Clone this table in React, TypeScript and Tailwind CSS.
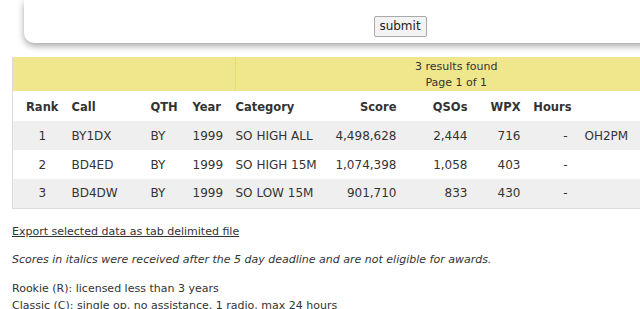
const rows = [
  { rank: 1, call: 'BY1DX', qth: 'BY', year: 1999, cat: 'SO HIGH ALL', score: '4,498,628', qsos: '2,444', wpx: '716', hours: '-', op: 'OH2PM' },
  { rank: 2, call: 'BD4ED', qth: 'BY', year: 1999, cat: 'SO HIGH 15M', score: '1,074,398', qsos: '1,058', wpx: '403', hours: '-', op: '' },
  { rank: 3, call: 'BD4DW', qth: 'BY', year: 1999, cat: 'SO LOW 15M', score: '901,710', qsos: '833', wpx: '430', hours: '-', op: '' },
];

export default function App() {
  return (
    <div className="w-[640px] h-[309px] overflow-hidden bg-white text-[12px] leading-[17px] text-[#333] font-['DejaVu_Sans','Verdana',sans-serif]">
      {/* search form card, only its bottom edge is in view */}
      <div className="ml-[24px] w-[752px] h-[43px] bg-white rounded-b-[10px] shadow-[0_3px_7px_rgba(0,0,0,0.35)] flex justify-center items-start pt-[16px]">
        <button className="w-[53px] h-[21px] border border-[#a9a9a9] rounded-[2px] bg-[#f3f3f3] text-[12px] leading-[19px] text-[#222]">
          submit
        </button>
      </div>

      <table className="mt-[14px] ml-[12px] w-[664px] table-fixed border-collapse border-l border-b border-[#dcdcdc]">
        <colgroup>
          <col className="w-[59px]" />
          <col className="w-[79px]" />
          <col className="w-[42px]" />
          <col className="w-[43px]" />
          <col className="w-[95px]" />
          <col className="w-[66px]" />
          <col className="w-[71px]" />
          <col className="w-[53px]" />
          <col className="w-[51px]" />
          <col className="w-[105px]" />
        </colgroup>
        <thead>
          <tr className="bg-[#f0e68c] h-[34px]">
            <th colSpan={4} className="font-normal"></th>
            <th colSpan={6} className="font-normal text-[11px] text-center leading-[16px] pt-[1px] border-l border-[#dcd6a4]">
              3 results found<br />Page 1 of 1
            </th>
          </tr>
          <tr className="h-[30px] font-bold text-[11.5px]">
            <th className="text-center pt-[2px]">Rank</th>
            <th className="text-left pt-[2px]">Call</th>
            <th className="text-left pt-[2px]">QTH</th>
            <th className="text-left pt-[2px]">Year</th>
            <th className="text-left pt-[2px]">Category</th>
            <th className="text-right pt-[2px]">Score</th>
            <th className="text-right pt-[2px]">QSOs</th>
            <th className="text-right pt-[2px]">WPX</th>
            <th className="text-right pt-[2px]">Hours</th>
            <th></th>
          </tr>
        </thead>
        <tbody>
          {rows.map((r, i) => (
            <tr key={r.rank} className={i % 2 === 0 ? 'h-[29px] bg-[#efefef]' : 'h-[29px] bg-white'}>
              <td className="text-center pt-[1px]">{r.rank}</td>
              <td className="pt-[1px]">{r.call}</td>
              <td className="pt-[1px]">{r.qth}</td>
              <td className="pt-[1px]">{r.year}</td>
              <td className="pt-[1px]">{r.cat}</td>
              <td className="text-right pt-[1px]">{r.score}</td>
              <td className="text-right pt-[1px]">{r.qsos}</td>
              <td className="text-right pt-[1px]">{r.wpx}</td>
              <td className="text-right pr-[4px] pt-[1px]">{r.hours}</td>
              <td className="pl-[13px] pt-[1px]">{r.op}</td>
            </tr>
          ))}
        </tbody>
      </table>

      <div className="pl-[12px] text-[11px]">
        <p className="mt-[14px]">
          <a href="#" className="underline">Export selected data as tab delimited file</a>
        </p>
        <p className="mt-[11px] italic">
          Scores in italics were received after the 5 day deadline and are not eligible for awards.
        </p>
        <p className="mt-[12px]">Rookie (R): licensed less than 3 years</p>
        <p>Classic (C): single op, no assistance, 1 radio, max 24 hours</p>
      </div>
    </div>
  );
}
